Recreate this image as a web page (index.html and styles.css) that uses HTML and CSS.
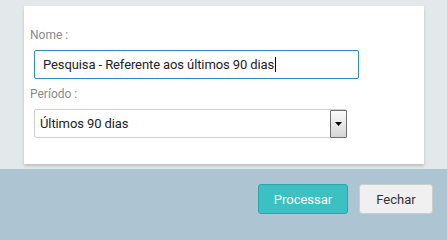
FILE: index.html
```html
<!DOCTYPE html>
<html>
<head>
<meta charset="utf-8">
<link rel="stylesheet" href="styles.css">
</head>
<body>
<div class="page">
  <div class="main">
    <div class="card">
      <label class="label">Nome :</label>
      <div class="input"><span>Pesquisa - Referente aos últimos 90 dias</span><span class="caret"></span></div>
      <label class="label label2">Período :</label>
      <div class="select">
        <span class="select-text">Últimos 90 dias</span>
        <span class="select-btn"><svg width="7" height="4" viewBox="0 0 7 4"><polygon points="0,0 7,0 3.5,4" fill="#000"/></svg></span>
      </div>
    </div>
  </div>
  <div class="footer">
    <button class="btn btn-primary">Processar</button>
    <button class="btn btn-default">Fechar</button>
  </div>
</div>
</body>
</html>
```
FILE: styles.css
```css
html {
  margin: 0;
  padding: 0;
  background: #adc5d2;
}
body {
  margin: 0;
  padding: 0;
  width: 447px;
  font-family: Roboto, "Liberation Sans", sans-serif;
  background: #e3e8eb;
}
.page {
  display: flex;
  flex-direction: column;
  min-height: 226px;
}
.main {
  height: 169px;
  padding: 6px 0 0 24px;
  box-sizing: border-box;
}
.card {
  width: 400px;
  height: 158px;
  background: #fff;
  box-shadow: 0 2px 3px rgba(0,0,0,0.18);
  box-sizing: border-box;
  padding: 22px 0 0 10px;
  display: flex;
  flex-direction: column;
}
.label {
  font-size: 12px;
  color: #8a8a8a;
  line-height: 14px;
  height: 14px;
  margin: 0 0 8px -4px;
}
.label2 {
  margin-top: 8px;
  margin-bottom: 8px;
}
.input {
  width: 325px;
  height: 29px;
  box-sizing: border-box;
  border: 1px solid #2e8bc4;
  border-radius: 2px;
  padding: 0 8px;
  display: flex;
  align-items: center;
  font-size: 13px;
  letter-spacing: -0.1px;
  color: #222;
}
.caret {
  display: inline-block;
  width: 1px;
  height: 15px;
  background: #000;
  margin-left: 1px;
}
.select {
  width: 313px;
  height: 29px;
  box-sizing: border-box;
  border: 1px solid #cfcfcf;
  border-radius: 2px;
  display: flex;
  align-items: center;
  justify-content: space-between;
  font-size: 13px;
  letter-spacing: -0.1px;
  color: #222;
  padding-left: 5px;
}
.select-btn {
  width: 17px;
  height: 28px;
  box-sizing: border-box;
  border: 1px solid #6f6f6f;
  border-radius: 1px;
  background: linear-gradient(#fbfbfb, #d6d6d6);
  display: flex;
  align-items: center;
  justify-content: center;
  margin-right: -1px;
}
.footer {
  flex: 1;
  background: #adc5d2;
  display: flex;
  justify-content: flex-end;
  align-items: flex-start;
  padding: 15px 14px 12px 0;
  gap: 11px;
}
.btn {
  height: 30px;
  box-sizing: border-box;
  border-radius: 3px;
  font-family: Roboto, "Liberation Sans", sans-serif;
  font-size: 13px;
  padding: 0;
}
.btn-primary {
  width: 90px;
  background: #3bc1c2;
  border: 1px solid #2fa3a8;
  color: #fff;
}
.btn-default {
  width: 74px;
  background: #f0f0f0;
  border: 1px solid #c8cdd0;
  color: #333;
}
```
